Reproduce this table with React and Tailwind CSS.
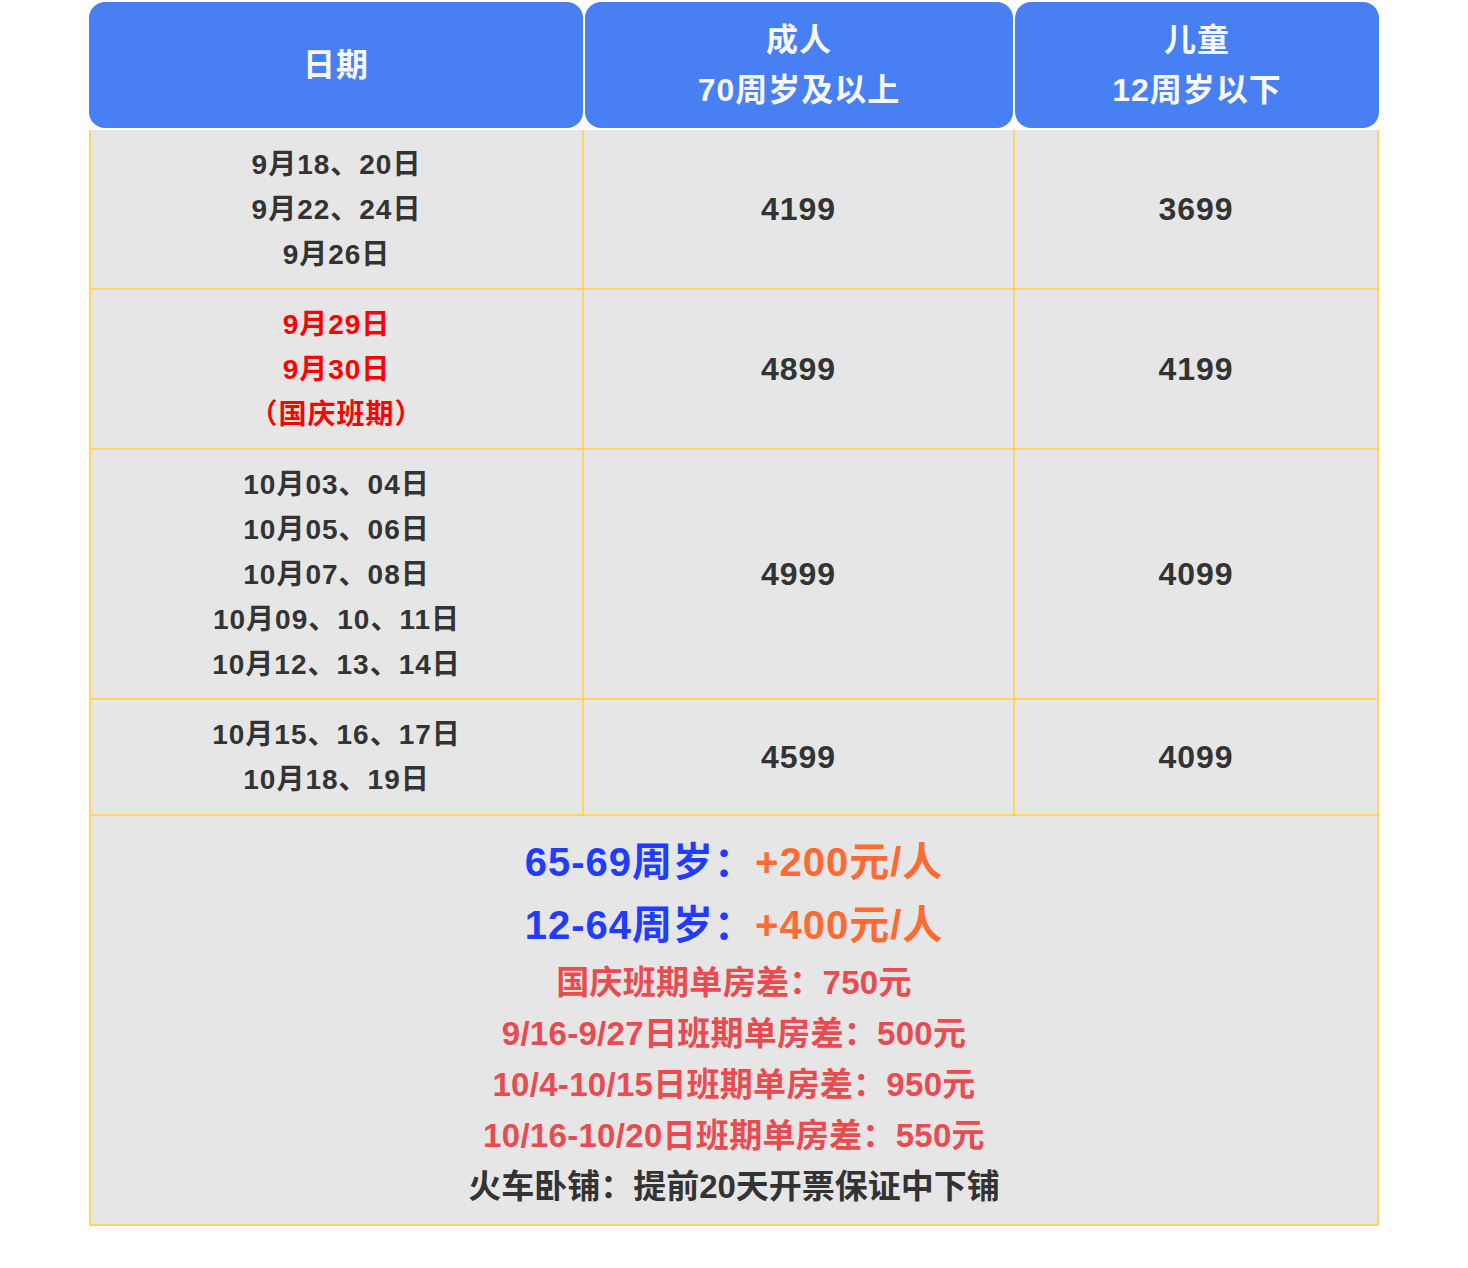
import React from 'react'

const rows = [
  { dates: ['9月18、20日', '9月22、24日', '9月26日'], adult: '4199', child: '3699' },
  { dates: ['9月29日', '9月30日', '（国庆班期）'], adult: '4899', child: '4199', red: true },
  {
    dates: ['10月03、04日', '10月05、06日', '10月07、08日', '10月09、10、11日', '10月12、13、14日'],
    adult: '4999',
    child: '4099',
  },
  { dates: ['10月15、16、17日', '10月18、19日'], adult: '4599', child: '4099', last: true },
]

const notes = [
  '国庆班期单房差：750元',
  '9/16-9/27日班期单房差：500元',
  '10/4-10/15日班期单房差：950元',
  '10/16-10/20日班期单房差：550元',
]

export default function App() {
  return (
    <div
      className="w-full bg-white pb-10 font-bold"
      style={{ fontFamily: '"Liberation Sans", Arial, "Noto Sans CJK SC", sans-serif' }}
    >
      <div className="mx-auto w-[1290px] pt-[2px]">
        {/* Header */}
        <div className="flex gap-[2px] h-[126px] text-[32px] leading-[50px] tracking-[1px] text-[#f8f8f8]">
          <div className="w-[494px] rounded-[16px] bg-[#4880f3] flex items-center justify-center">
            日期
          </div>
          <div className="w-[428px] rounded-[16px] bg-[#4880f3] flex flex-col items-center justify-center">
            <span>成人</span>
            <span>70周岁及以上</span>
          </div>
          <div className="w-[364px] rounded-[16px] bg-[#4880f3] flex flex-col items-center justify-center">
            <span>儿童</span>
            <span>12周岁以下</span>
          </div>
        </div>

        {/* Body */}
        <div className="mt-[2px] bg-[#e6e6e6] border-x-2 border-b-2 border-[#ffd463]">
          {rows.map((r, i) => (
            <div key={i} className="grid grid-cols-[493px_431px_1fr] border-b-2 border-[#ffd463]">
              <div
                className={`flex flex-col items-center justify-center pt-[12px] text-[28px] leading-[45px] tracking-[1px] border-r-2 border-[#ffd463] ${
                  r.last ? 'pb-[12px]' : 'pb-[11px]'
                } ${r.red ? 'text-[#ff0000]' : 'text-[#333333]'}`}
              >
                {r.dates.map((d) => (
                  <span key={d}>{d}</span>
                ))}
              </div>
              <div className="flex items-center justify-center text-[32px] tracking-[1px] text-[#333333] border-r-2 border-[#ffd463]">
                {r.adult}
              </div>
              <div className="flex items-center justify-center text-[32px] tracking-[1px] text-[#333333]">
                {r.child}
              </div>
            </div>
          ))}

          <div className="flex flex-col items-center pt-[15px] pb-[12px]">
            <p className="text-[40px] leading-[63px] tracking-[1px]">
              <span className="text-[#1f3cff]">65-69周岁：</span>
              <span className="text-[#ff6a33]">+200元/人</span>
            </p>
            <p className="text-[40px] leading-[63px] tracking-[1px]">
              <span className="text-[#1f3cff]">12-64周岁：</span>
              <span className="text-[#ff6a33]">+400元/人</span>
            </p>
            {notes.map((n) => (
              <p key={n} className="text-[33px] leading-[51px] tracking-[0.3px] text-[#e94b50]">
                {n}
              </p>
            ))}
            <p className="text-[33px] leading-[51px] text-[#333333]">火车卧铺：提前20天开票保证中下铺</p>
          </div>
        </div>
      </div>
    </div>
  )
}
